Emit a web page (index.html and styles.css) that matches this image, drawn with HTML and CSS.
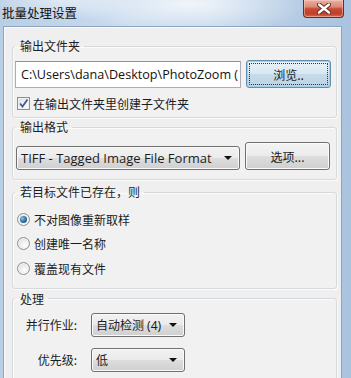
FILE: index.html
```html
<!DOCTYPE html>
<html lang="zh-CN">
<head>
<meta charset="utf-8">
<title>批量处理设置</title>
<link rel="stylesheet" href="styles.css">
</head>
<body>
<div class="window">
  <div class="titlebar">
    <span class="title">批量处理设置</span>
    <div class="close">
      <svg width="14" height="11" viewBox="0 0 14 11">
        <path d="M2 1.5 L12 9.5 M12 1.5 L2 9.5" stroke="#5a2a22" stroke-width="4.2" stroke-linecap="round"/>
        <path d="M2 1.5 L12 9.5 M12 1.5 L2 9.5" stroke="#ffffff" stroke-width="2.4" stroke-linecap="round"/>
      </svg>
    </div>
  </div>
  <div class="client">
    <fieldset class="group g1">
      <legend>输出文件夹</legend>
      <div class="row row-path">
        <div class="textbox">C:\Users\dana\Desktop\PhotoZoom (</div>
        <div class="btn btn-focused"><span class="focus-ring">浏览..</span></div>
      </div>
      <div class="check-row">
        <span class="checkbox">
          <svg width="11" height="11" viewBox="0 0 11 11"><path d="M2 5.5 L4.5 8.5 L9.5 1.5" fill="none" stroke="#3d5a99" stroke-width="1.8"/></svg>
        </span>
        <span>在输出文件夹里创建子文件夹</span>
      </div>
    </fieldset>

    <fieldset class="group g2">
      <legend>输出格式</legend>
      <div class="row row-format">
        <div class="combo combo-wide"><span class="combo-text">TIFF - Tagged Image File Format</span><span class="arrow"></span></div>
        <div class="btn">选项...</div>
      </div>
    </fieldset>

    <fieldset class="group g3">
      <legend>若目标文件已存在，则</legend>
      <div class="radio-row"><span class="radio checked"></span><span>不对图像重新取样</span></div>
      <div class="radio-row"><span class="radio"></span><span>创建唯一名称</span></div>
      <div class="radio-row"><span class="radio"></span><span>覆盖现有文件</span></div>
    </fieldset>

    <fieldset class="group g4">
      <legend>处理</legend>
      <div class="form-grid">
        <span class="form-label">并行作业:</span>
        <div class="combo combo-small"><span class="combo-text">自动检测 (4)</span><span class="arrow"></span></div>
        <span class="form-label">优先级:</span>
        <div class="combo combo-small"><span class="combo-text">低</span><span class="arrow"></span></div>
      </div>
    </fieldset>
  </div>
</div>
</body>
</html>
```

FILE: styles.css
```css
* { box-sizing: border-box; }

html, body {
  margin: 0;
  padding: 0;
}

body {
  width: 351px;
  height: 378px;
  overflow: hidden;
  font-family: "Open Sans", "Noto Sans CJK SC", sans-serif;
  font-size: 12px;
  color: #1c1c1c;
}

.window {
  width: 351px;
  height: 378px;
  display: flex;
  flex-direction: column;
  background:
    radial-gradient(ellipse 120px 30px at 190px 4px, rgba(255,255,255,0.75), rgba(255,255,255,0) 100%),
    radial-gradient(ellipse 80px 20px at 60px 0px, rgba(255,255,255,0.5), rgba(255,255,255,0) 100%),
    linear-gradient(to right, #b9cfe6 0%, #c8daee 35%, #c4d7ec 60%, #a9c3df 100%);
}

.titlebar {
  height: 26px;
  display: flex;
  align-items: flex-start;
  flex: none;
}

.title {
  padding-left: 2px;
  line-height: 26px;
  font-size: 12.5px;
  color: #111;
  font-family: "Noto Sans CJK SC", sans-serif;
}

.close {
  margin-left: auto;
  margin-right: 7px;
  width: 41px;
  height: 18px;
  border: 1px solid #6e2a20;
  border-top: none;
  border-radius: 0 0 4px 4px;
  background: linear-gradient(to bottom, #eab0a2 0%, #dc8a76 40%, #c94a32 52%, #c0402a 80%, #d8684e 100%);
  box-shadow: inset 0 0 0 1px rgba(255,220,210,0.45);
  display: flex;
  align-items: center;
  justify-content: center;
}

.client {
  flex: 1;
  margin: 0 9px 0 3px;
  border: 1px solid #8fa5bd;
  border-bottom: none;
  background: #efefef;
  box-shadow: inset 1px 1px 0 #fafafa;
}

.group {
  margin: 0 4px 0 8px;
  padding: 0 5px 0 2px;
  border: 1px solid #d6d9dc;
  border-radius: 3px;
  box-shadow: inset 1px 1px 0 #fbfbfb, 1px 1px 0 #fbfbfb;
  background: #f1f1f1;
  min-width: 0;
}

.group legend {
  padding: 0 4px 0 5px;
  line-height: 14px;
  font-family: "Noto Sans CJK SC", sans-serif;
  font-size: 12px;
  color: #1e1e1e;
}

.g1 { margin-top: 12px; padding-bottom: 6px; }
.g2 { margin-top: 2px; padding-bottom: 9px; }
.g3 { margin-top: 5px; padding-bottom: 7px; }
.g4 { margin-top: 3px; padding-bottom: 8px; }

.row {
  display: flex;
  align-items: flex-end;
  gap: 5px;
}

.row-path { margin-top: 7px; }
.row-format { margin-top: 8px; }

.textbox {
  width: 226px;
  height: 27px;
  border: 1px solid #abadb3;
  border-top-color: #8f9296;
  background: #fff;
  padding-left: 5px;
  line-height: 25px;
  font-size: 12.6px;
  white-space: nowrap;
  overflow: hidden;
  color: #111;
}

.btn {
  width: 85px;
  height: 28px;
  border: 1px solid #707070;
  border-radius: 3px;
  background: linear-gradient(to bottom, #f4f4f4 0%, #ebebeb 48%, #dddddd 52%, #cfcfcf 100%);
  box-shadow: inset 0 0 0 1px #fbfbfb;
  display: flex;
  align-items: center;
  justify-content: center;
  font-family: "Noto Sans CJK SC", sans-serif;
  font-size: 12px;
  color: #1a1a1a;
}

.btn-focused {
  border-color: #5f8fb0;
  background: linear-gradient(to bottom, #e9f2f8 0%, #d9e7f1 48%, #c6dbea 52%, #bcd3e4 100%);
  box-shadow: inset 0 0 0 1px #a5d0ec;
  padding: 2px;
}

.focus-ring {
  flex: 1;
  align-self: stretch;
  display: flex;
  align-items: center;
  justify-content: center;
  border: 1px dotted #333;
  border-radius: 1px;
}

.check-row {
  margin-top: 7px;
  display: flex;
  align-items: center;
  height: 16px;
  font-family: "Noto Sans CJK SC", sans-serif;
}

.checkbox {
  width: 13px;
  height: 13px;
  margin: 0 3px 0 2px;
  border: 1px solid #8e8f8f;
  background: linear-gradient(135deg, #dcdcdc 0%, #f4f4f4 60%, #ffffff 100%);
  box-shadow: inset 0 0 0 1px #f0f0f0;
  display: flex;
  align-items: center;
  justify-content: center;
}

.combo {
  height: 24px;
  border: 1px solid #707070;
  border-radius: 3px;
  background: linear-gradient(to bottom, #f2f2f2 0%, #ebebeb 48%, #dddddd 52%, #cfcfcf 100%);
  box-shadow: inset 0 0 0 1px #fafafa;
  display: flex;
  align-items: center;
  padding: 0 4px 0 4px;
  white-space: nowrap;
}

.combo-wide {
  width: 224px;
  margin-left: 1px;
  font-size: 13px;
}

.combo-small {
  width: 94px;
  font-family: "Noto Sans", "Noto Sans CJK SC", sans-serif;
}

.combo-text {
  flex: 1;
  overflow: hidden;
}

.arrow {
  width: 0;
  height: 0;
  border-left: 4px solid transparent;
  border-right: 4px solid transparent;
  border-top: 4px solid #111;
  margin-right: 3px;
}

.radio-row {
  height: 24.5px;
  display: flex;
  align-items: center;
  font-family: "Noto Sans CJK SC", sans-serif;
}

.g3 legend + .radio-row { margin-top: 8px; }

.radio {
  width: 13px;
  height: 13px;
  margin: 0 4px 0 2px;
  border-radius: 50%;
  border: 1px solid #8e8f8f;
  background: radial-gradient(circle at 60% 65%, #ffffff 0%, #e6e6e6 60%, #d4d4d4 100%);
  box-shadow: inset 0 0 0 1px #f4f4f4;
  position: relative;
}

.radio.checked::after {
  content: "";
  position: absolute;
  left: 2px;
  top: 2px;
  width: 7px;
  height: 7px;
  border-radius: 50%;
  background: radial-gradient(circle at 35% 35%, #8fc6e8 0%, #2a6a9a 55%, #1d4f74 100%);
}

.form-grid {
  margin-top: 7px;
  display: grid;
  grid-template-columns: 62px 94px;
  column-gap: 14px;
  row-gap: 11px;
  align-items: center;
}

.form-label {
  text-align: right;
  font-family: "Noto Sans CJK SC", sans-serif;
}
```
